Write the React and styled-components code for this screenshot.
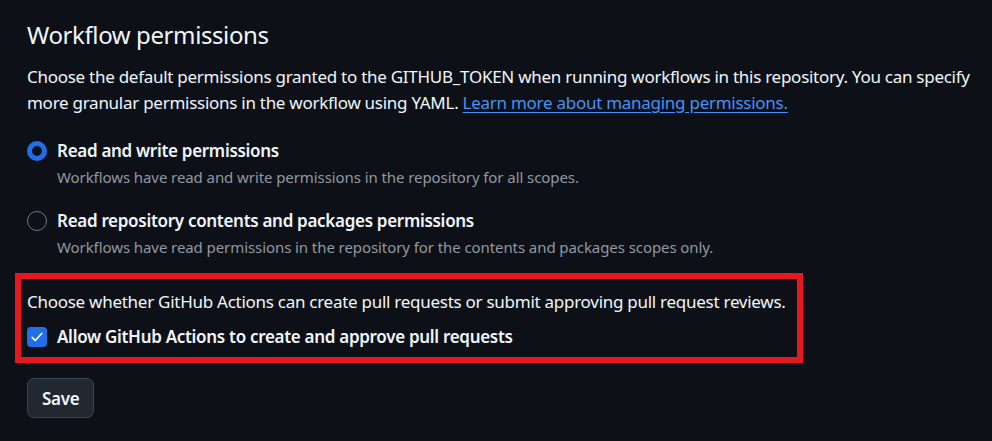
import React from 'react';
import styled, { createGlobalStyle } from 'styled-components';

const GlobalStyle = createGlobalStyle`
    html, body {
        margin: 0;
        padding: 0;
        background: #0d1117;
    }
    body {
        font-family: "Segoe UI", "Noto Sans", "Liberation Sans", sans-serif;
        color: #f0f6fc;
        -webkit-font-smoothing: antialiased;
    }
`;

const Page = styled.div`
    width: 992px;
    height: 441px;
    box-sizing: border-box;
    padding: 17px 15px 0 27px;
    overflow: hidden;
`;

const Heading = styled.h2`
    margin: 0;
    font-size: 24px;
    font-weight: 400;
    letter-spacing: -0.4px;
    line-height: 36px;
`;

const Paragraph = styled.p`
    margin: 11px 0 0;
    font-size: 17px;
    letter-spacing: -0.27px;
    line-height: 25.5px;
    max-width: 950px;
`;

const Link = styled.a`
    color: #4493f8;
    text-decoration: underline;
    text-underline-offset: 3px;
`;

const Options = styled.div`
    display: flex;
    flex-direction: column;
    gap: 21px;
    margin-top: 23px;
`;

const Option = styled.div`
    display: grid;
    grid-template-columns: 20px 1fr;
    column-gap: 10px;
    align-items: center;
`;

const Radio = styled.span`
    width: 20px;
    height: 20px;
    box-sizing: border-box;
    border-radius: 50%;
    border: ${p => (p.checked ? '5px solid #1f6feb' : '1.25px solid #6e7681')};
    background: #0d1117;
`;

const Label = styled.span`
    font-size: 17px;
    font-weight: 600;
    letter-spacing: -0.3px;
    line-height: 25px;
`;

const Note = styled.span`
    grid-column: 2;
    margin-top: 4px;
    font-size: 15px;
    letter-spacing: -0.08px;
    line-height: 20px;
    color: #9198a1;
`;

const Highlight = styled.div`
    margin: 16px 0 0 -12px;
    width: 788px;
    box-sizing: border-box;
    border: 6px solid #e3191f;
    padding: 10px 6px 8px;
`;

const BoxText = styled.p`
    margin: 0;
    font-size: 17px;
    letter-spacing: -0.27px;
    line-height: 25px;
`;

const CheckRow = styled.label`
    display: flex;
    align-items: center;
    gap: 10px;
    margin-top: 10px;
`;

const Checkbox = styled.span`
    width: 20px;
    height: 20px;
    border-radius: 4px;
    background: #1f6feb;
    display: flex;
    align-items: center;
    justify-content: center;
`;

const SaveButton = styled.button`
    margin-top: 15px;
    height: 40px;
    padding: 0 14px;
    border-radius: 7px;
    border: 1px solid #3d444d;
    background: #212830;
    color: #f0f6fc;
    font-family: inherit;
    font-size: 17px;
    font-weight: 600;
    letter-spacing: -0.3px;
`;

const CheckIcon = () => (
    <svg width="14" height="14" viewBox="0 0 16 16" fill="none">
        <path d="M2.5 8.5 6 12l7.5-8" stroke="#fff" strokeWidth="2" strokeLinecap="round" strokeLinejoin="round" />
    </svg>
);

export default function App() {
    return (
        <Page>
            <GlobalStyle />
            <Heading>Workflow permissions</Heading>
            <Paragraph>
                Choose the default permissions granted to the GITHUB_TOKEN when running workflows in this repository. You can specify more granular permissions in the workflow using YAML.{' '}
                <Link href="#">Learn more about managing permissions.</Link>
            </Paragraph>

            <Options>
                <Option>
                    <Radio checked />
                    <Label>Read and write permissions</Label>
                    <Note>Workflows have read and write permissions in the repository for all scopes.</Note>
                </Option>
                <Option>
                    <Radio />
                    <Label>Read repository contents and packages permissions</Label>
                    <Note>Workflows have read permissions in the repository for the contents and packages scopes only.</Note>
                </Option>
            </Options>

            <Highlight>
                <BoxText>Choose whether GitHub Actions can create pull requests or submit approving pull request reviews.</BoxText>
                <CheckRow>
                    <Checkbox><CheckIcon /></Checkbox>
                    <Label>Allow GitHub Actions to create and approve pull requests</Label>
                </CheckRow>
            </Highlight>

            <SaveButton>Save</SaveButton>
        </Page>
    );
}
